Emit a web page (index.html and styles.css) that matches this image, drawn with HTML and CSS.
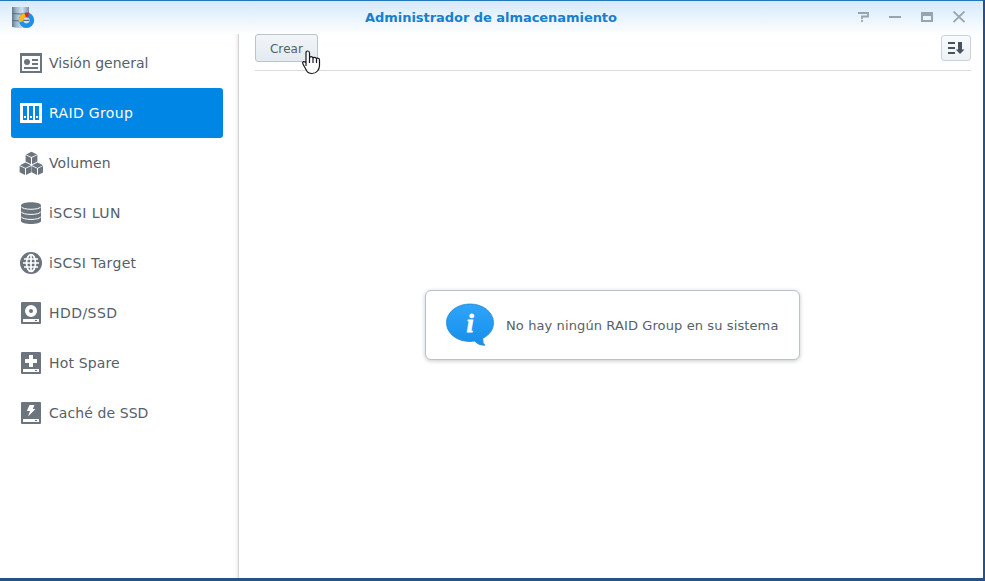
FILE: index.html
```html
<!DOCTYPE html>
<html lang="es">
<head>
<meta charset="utf-8">
<title>Administrador de almacenamiento</title>
<link rel="stylesheet" href="styles.css">
</head>
<body>
<div class="window">
  <header class="titlebar">
    <svg class="app-icon" width="24" height="22" viewBox="0 0 24 22">
      <defs>
        <linearGradient id="metal"><stop offset="0" stop-color="#60798b"/><stop offset=".25" stop-color="#9fb7c9"/><stop offset=".6" stop-color="#d2e2ef"/><stop offset="1" stop-color="#7892a5"/></linearGradient>
      </defs>
      <path d="M1 0h17v20q-8 2-17 0z" fill="url(#metal)"/>
      <path d="M1 6.500q8 1 17 0M1 13.500q8 1 17 0" stroke="#58707f" fill="none"/>
      <circle cx="15.500" cy="13.300" r="5.400" fill="none" stroke="#1793ee" stroke-width="4.600"/>
      <path d="M10.200 14.800a5.400 5.400 0 0 1 4.300-6.800" fill="none" stroke="#fbb81c" stroke-width="4.600"/>
      <path d="M13.300 6l5-.5-1.200 5h-2z" fill="#d62d2b"/>
      <circle cx="15.500" cy="13.300" r="2.900" fill="#cfdfea"/>
      <path d="M12.500 13.300h6" stroke="#48545e"/>
    </svg>
    <h1>Administrador de almacenamiento</h1>
    <div class="controls">
      <svg width="12" height="12" viewBox="0 0 12 12"><path d="M1 2h10v3.500H5v2.500M5 9v2" fill="none" stroke="#98a4b0" stroke-width="1.800"/></svg>
      <svg width="12" height="12" viewBox="0 0 12 12"><path d="M0 6h12" stroke="#98a4b0" stroke-width="2"/></svg>
      <svg width="12" height="12" viewBox="0 0 12 12"><path d="M0 1h12v10H0zM2 5v4h8V5z" fill="#98a4b0" fill-rule="evenodd"/></svg>
      <svg width="12" height="12" viewBox="0 0 12 12"><path d="M.5.500l11 10.500M11.500.500L.5 11" stroke="#98a4b0" stroke-width="1.800"/></svg>
    </div>
  </header>
  <div class="body">
    <nav class="sidebar">
      <a class="item"><svg width="24" height="24" viewBox="0 0 24 24"><path fill="currentColor" fill-rule="evenodd" d="M1 2h22v20H1zM3 5v15h18V5z"/><circle cx="8" cy="11" r="3" fill="currentColor"/><path d="M13 9h6M13 13h6M5 17h14" stroke="currentColor" stroke-width="2"/></svg><span>Visión general</span></a>
      <a class="item active"><svg width="24" height="24" viewBox="0 0 24 24"><path fill="#fff" fill-rule="evenodd" d="M1 2h22v20H1zM4 5v14h4V5zM10 5v14h4V5zM16 5v14h4V5z"/><path d="M5 15h2v2H5zM11 15h2v2h-2zM17 15h2v2h-2z" fill="#fff"/></svg><span class="track-raid">RAID Group</span></a>
      <a class="item"><svg width="24" height="24" viewBox="0 0 24 24">
        <defs><g id="cube"><path d="M0-6.200l5.500 2.600L0-.9l-5.500-2.700z"/><path d="M-5.900-2.900L-.5-.2V6.200l-5.400-2.800zM5.900-2.900L.5-.2V6.200l5.400-2.800z"/></g></defs>
        <g fill="currentColor"><use href="#cube" x="12.500" y="7"/><use href="#cube" x="6.500" y="17.800"/><use href="#cube" x="18.500" y="17.800"/></g></svg><span class="track-wide">Volumen</span></a>
      <a class="item"><svg width="24" height="24" viewBox="0 0 24 24"><path fill="currentColor" d="M2 4.500C2 .2 22 .2 22 4.500v15.500c0 4-20 4-20 0z"/><path d="M2 5.500c1 3.700 19 3.700 20 0M2 10.500c1 3.900 19 3.900 20 0M2 15.500c1 3.900 19 3.900 20 0" fill="none" stroke="#fff" stroke-width="1"/></svg><span class="track-lun">iSCSI LUN</span></a>
      <a class="item"><svg width="24" height="24" viewBox="0 0 24 24"><circle cx="12" cy="12" r="11" fill="currentColor"/><g fill="none" stroke="#fff" stroke-width="1.700"><path d="M12 4v16M4 12h16M5 8h14M5 16h14"/><ellipse cx="12" cy="12" rx="4.500" ry="8.500"/></g></svg><span class="track-raid">iSCSI Target</span></a>
      <a class="item"><svg width="24" height="24" viewBox="0 0 24 24"><rect x="2" y="1" width="20" height="22" rx="1" fill="currentColor"/><path d="M4 18h16v3H4z" fill="#fff"/><path d="M16 19h2v1h-2z" fill="currentColor"/><circle cx="12" cy="10" r="4" fill="none" stroke="#fff" stroke-width="4"/></svg><span class="track-lun">HDD/SSD</span></a>
      <a class="item"><svg width="24" height="24" viewBox="0 0 24 24"><rect x="2" y="1" width="20" height="22" rx="1" fill="currentColor"/><path d="M4 18h16v3H4zM10 4h4v4h4v4h-4v4h-4v-4H6V8h4z" fill="#fff"/><path d="M16 19h2v1h-2z" fill="currentColor"/></svg><span class="track-spare">Hot Spare</span></a>
      <a class="item"><svg width="24" height="24" viewBox="0 0 24 24"><rect x="2" y="1" width="20" height="22" rx="1" fill="currentColor"/><path d="M4 18h16v3H4zM10.500 4h5L13.800 8h2.700L9 15.500l2-5.500H7.800z" fill="#fff"/><path d="M16 19h2v1h-2z" fill="currentColor"/></svg><span class="track-cache">Caché de SSD</span></a>
    </nav>
    <main class="content">
      <div class="toolbar">
        <button class="btn create">Crear</button>
        <button class="btn sort" aria-label="Ordenar"><svg width="18" height="14" viewBox="0 0 18 14"><path d="M1 2h7M1 7h7M1 12h7" stroke="#48535f" stroke-width="2"/><path d="M11 1h4v7.500h2.500L13 13 8.800 8.500H11z" fill="#48535f"/></svg></button>
      </div>
      <div class="empty">
        <div class="notice">
          <svg width="50" height="44" viewBox="0 0 50 44">
            <defs><linearGradient id="bubble" x2="0" y2="1"><stop offset="0" stop-color="#2fa4fa"/><stop offset="1" stop-color="#168fea"/></linearGradient></defs>
            <path d="M25 1C11.800 1 1.500 9.300 1.500 19.800S11.800 38.500 25 38.500q2.500 0 4.500-.4 4.500 4.700 10.300 4.200-2.500-2.400-2-7C44.500 32 48.500 26.300 48.500 19.800 48.500 9.300 38.200 1 25 1z" fill="url(#bubble)" stroke="#2385d0" stroke-width=".8"/>
            <text x="25" y="29" text-anchor="middle" class="info">i</text>
          </svg>
          <span>No hay ningún RAID Group en su sistema</span>
        </div>
      </div>
    </main>
  </div>
</div>
<svg class="cursor" width="20" height="26" viewBox="0 0 20 26"><path d="M5 15.500V3q0-2 1.700-2T8.500 3v5q.4-1.300 1.800-1.300T12 8.300q.5-1 1.700-1 1.300 0 1.700 1.400.4-.6 1.400-.6 1.700 0 1.700 1.900v5.500q0 3-2 5.500-2 2.500-5.500 2.500-4 0-5.500-3L2.500 15q-1.500-2.300-.3-3.200 1.300-.8 2.800 1.200zM8.500 8v5M12 8.500v4.500M15.500 9v4" fill="#fff" stroke="#17171d" stroke-width="1.200" stroke-linejoin="round"/></svg>
</body>
</html>
```
FILE: styles.css
```css
* { box-sizing: border-box; }
body {
  margin: 0;
  height: 581px;
  overflow: hidden;
  padding: 0 2px 3px 0;
  background: #285083;
  font-family: Verdana, "DejaVu Sans", sans-serif;
  color: #566069;
}
.window {
  height: 578px;
  border-top: 1px solid #2277b8;
  background: linear-gradient(#d4eafb, #fff 34px);
  display: flex;
  flex-direction: column;
}
.titlebar {
  height: 33px;
  flex: none;
  display: grid;
  grid-template-columns: 1fr auto 1fr;
  align-items: center;
  padding: 0 18px 0 11px;
}
.app-icon { margin-bottom: 0; }
h1 {
  margin: 0 0 0 6px;
  font-size: 13px;
  line-height: 16px;
  font-weight: bold;
  color: #1680cf;
  letter-spacing: -0.05px;
}
.controls { display: flex; gap: 20px; justify-content: flex-end; padding-bottom: 1px; }
.body { flex: 1; display: flex; min-height: 0; }
.sidebar {
  width: 239px;
  flex: none;
  padding: 4px 15px 0 11px;
  border-right: 1px solid #d5d6d8;
  box-shadow: inset -3px 0 3px -2px #e6e6e6;
}
.item {
  height: 50px;
  display: flex;
  align-items: center;
  padding-left: 8px;
  gap: 6px;
  color: #6c747e;
  border-radius: 3px;
  font-size: 14px;
}
.item span { color: #566069; white-space: nowrap; }
.item.active { background: #0086e5; }
.item.active span { color: #fff; }
.track-raid { letter-spacing: 0.34px; }
.track-wide { letter-spacing: 0.1px; }
.track-lun { letter-spacing: 0.45px; }
.track-spare { letter-spacing: 0.15px; }
.track-cache { letter-spacing: 0.08px; }
.content {
  flex: 1;
  display: flex;
  flex-direction: column;
  padding: 0 12px 0 16px;
}
.toolbar {
  height: 37px;
  flex: none;
  border-bottom: 1px solid #d5dce2;
  display: flex;
  justify-content: space-between;
  align-items: flex-start;
}
.btn {
  border: 1px solid #b9c4ce;
  border-radius: 3px;
  background: linear-gradient(#f9fbfd, #edf2f6);
  padding: 0;
  font-family: inherit;
  font-size: 12px;
  color: #566069;
}
.create {
  width: 63px;
  height: 28px;
  padding-top: 1px;
  background: linear-gradient(#f2f5f8, #e3eaf0);
  letter-spacing: 0.1px;
}
.sort {
  width: 30px;
  height: 26px;
  margin-top: 1px;
  border-color: #c8d2dc;
  display: grid;
  place-items: center;
}
.empty { flex: 1; display: grid; place-items: center; }
.notice {
  width: 375px;
  height: 70px;
  margin: 1px 1px 0 0;
  padding-left: 19px;
  border: 1px solid #b9c2cd;
  border-radius: 6px;
  box-shadow: 0 1px 4px rgba(0,0,0,.22);
  background: #fff;
  display: flex;
  align-items: center;
  gap: 11px;
  font-size: 13px;
  letter-spacing: 0.11px;
  white-space: nowrap;
}
.info { font: italic bold 26px "Liberation Serif", serif; fill: #fff; stroke: #fff; stroke-width: .8px; letter-spacing: 0; }
.cursor { position: absolute; left: 301px; top: 50px; }
```
